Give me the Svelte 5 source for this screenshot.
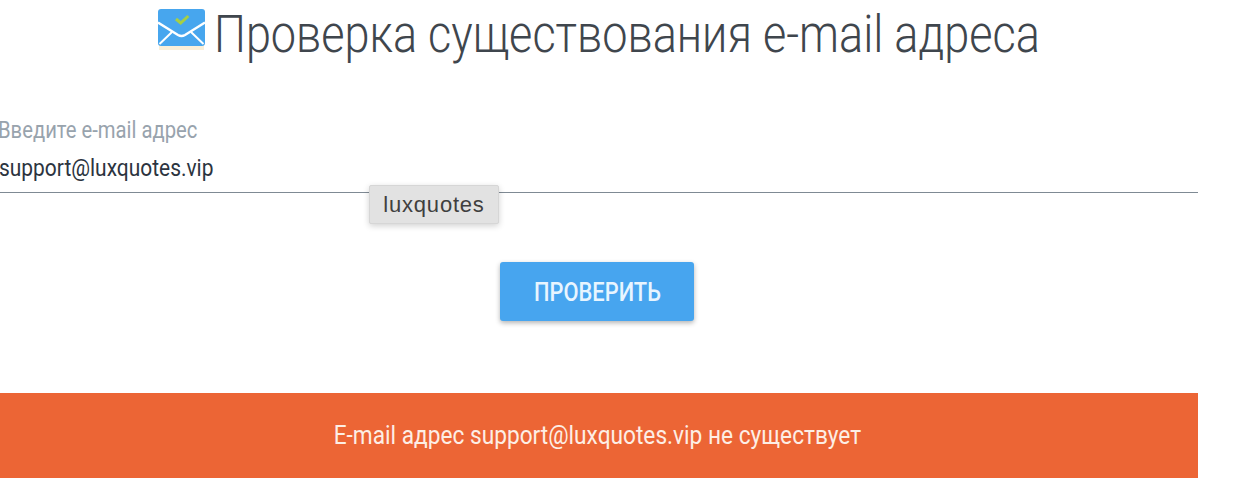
<script>
  let email = "support@luxquotes.vip";
</script>

<main>
  <h1>
    <svg class="mail-icon" width="48" height="42" viewBox="0 0 48 42">
      <rect x="1" y="36" width="45" height="5" fill="#f8ebcf" opacity="0.8" />
      <rect x="0" y="0" width="47" height="37" rx="3" fill="#47a6ee" />
      <path d="M0 13.5 L20 26 Q23.5 28 27 26 L47 13.5" fill="none" stroke="#fff" stroke-width="2.4" />
      <path d="M1.5 35 L14 23 M45.5 35 L33 23" fill="none" stroke="#fff" stroke-width="2" />
      <path d="M18 10 L22.7 14 L30.3 7" fill="none" stroke="#a6cf45" stroke-width="3" />
    </svg>
    <span class="title">Проверка существования e-mail адреса</span>
  </h1>

  <div class="field">
    <span class="label"><span class="narrow">Введите e-mail адрес</span></span>
    <div class="value"><span class="narrow">{email}</span></div>
    <div class="tooltip">luxquotes</div>
  </div>

  <div class="actions">
    <button type="button"><span class="narrow">ПРОВЕРИТЬ</span></button>
  </div>

  <div class="result"><span class="narrow">E-mail адрес {email} не существует</span></div>
</main>

<style>
  :global(body) {
    margin: 0;
    background: #fff;
    font-family: Roboto, "Noto Sans", sans-serif;
    overflow: hidden;
  }

  main {
    width: 1198px;
    height: 486px;
  }

  h1 {
    margin: 0;
    height: 68px;
    padding-right: 2px;
    box-sizing: border-box;
    display: flex;
    align-items: center;
    justify-content: center;
    gap: 8px;
    font-size: 51px;
    font-weight: 300;
    color: #3f464d;
    white-space: nowrap;
  }

  .mail-icon {
    flex: none;
    margin-top: -8px;
  }

  .title {
    display: inline-block;
    width: 825px;
    transform: scaleX(0.883);
    transform-origin: left center;
  }

  .narrow {
    display: inline-block;
    transform-origin: left center;
    white-space: nowrap;
  }

  .field {
    position: relative;
    margin-top: 50px;
    height: 74px;
    border-bottom: 1px solid #7f8a94;
  }

  .label {
    display: block;
    margin-left: -2px;
    padding-top: 1px;
    font-size: 23px;
    line-height: 24px;
    color: #98a3ad;
  }

  .label .narrow {
    transform: scaleX(0.88);
  }

  .value {
    margin-left: -1px;
    margin-top: 13px;
    font-size: 23px;
    line-height: 26px;
    color: #2c3440;
  }

  .value .narrow {
    transform: scaleX(0.91);
  }

  .tooltip {
    position: absolute;
    left: 369px;
    top: 67px;
    width: 130px;
    height: 39px;
    box-sizing: border-box;
    display: flex;
    align-items: center;
    justify-content: center;
    background: #e2e2e2;
    border: 1px solid #d6d6d6;
    border-radius: 2px;
    box-shadow: 0 2px 6px rgba(0, 0, 0, 0.18);
    font-family: "Liberation Sans", sans-serif;
    font-size: 22px;
    letter-spacing: 0.8px;
    color: #3f3f3f;
  }

  .actions {
    display: flex;
    justify-content: center;
    margin-top: 69px;
    padding-right: 4px;
  }

  button {
    width: 194px;
    height: 59px;
    padding: 0;
    border: none;
    border-radius: 3px;
    background: #47a5ef;
    box-shadow: 0 2px 5px rgba(0, 0, 0, 0.3);
    color: #e8f5ff;
    font-family: inherit;
    font-size: 26px;
    font-weight: 500;
    display: flex;
    align-items: center;
    justify-content: center;
  }

  button .narrow {
    transform: scaleX(0.84);
    transform-origin: center;
  }

  .result {
    margin-top: 72px;
    height: 85px;
    padding: 0 4px 2px 0;
    box-sizing: border-box;
    display: flex;
    align-items: center;
    justify-content: center;
    background: #ec6535;
    color: #fdeee5;
    font-size: 26px;
  }

  .result .narrow {
    transform: scaleX(0.872);
    transform-origin: center;
  }
</style>
